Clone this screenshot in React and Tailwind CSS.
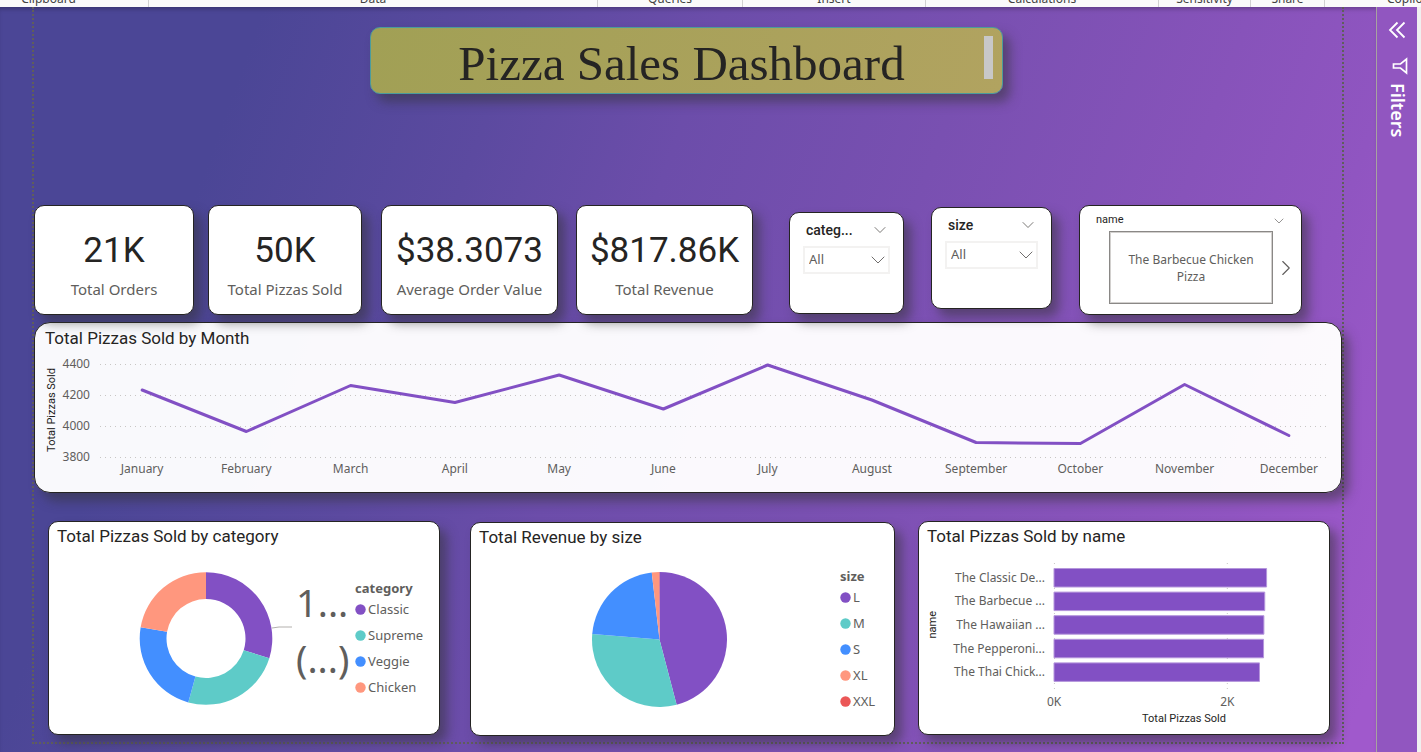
import { ChevronDown, ChevronRight } from "lucide-react";

const PURPLE = "#8250c4";
const TEAL = "#5ecbc8";
const BLUE = "#438fff";
const CORAL = "#ff977e";
const RED = "#eb5757";

const card =
  "min-w-0 rounded-[10px] border border-[#252423] bg-white shadow-[7px_8px_11px_rgba(50,50,50,0.5)]";

const ribbonGroups = ["Data", "Queries", "Insert", "Calculations", "Sensitivity", "Share"];

const months = [
  ["January", 40],
  ["February", 81.5],
  ["March", 35.5],
  ["April", 52.5],
  ["May", 25],
  ["June", 59],
  ["July", 15],
  ["August", 50],
  ["September", 92.5],
  ["October", 93.5],
  ["November", 34.5],
  ["December", 85.5],
];

const categories = [
  { label: "Classic", color: PURPLE, from: 0, to: 107.3 },
  { label: "Supreme", color: TEAL, from: 107.3, to: 195.5 },
  { label: "Veggie", color: BLUE, from: 195.5, to: 279.7 },
  { label: "Chicken", color: CORAL, from: 279.7, to: 360 },
];

const sizes = [
  { label: "L", color: PURPLE, from: 0, to: 165.3 },
  { label: "M", color: TEAL, from: 165.3, to: 274.7 },
  { label: "S", color: BLUE, from: 274.7, to: 353.4 },
  { label: "XL", color: CORAL, from: 353.4, to: 359.5 },
  { label: "XXL", color: RED, from: 359.5, to: 360 },
];

const pizzas = [
  ["The Classic De...", 2453],
  ["The Barbecue ...", 2432],
  ["The Hawaiian ...", 2422],
  ["The Pepperoni...", 2418],
  ["The Thai Chick...", 2371],
];

function slicePath(cx, cy, outer, inner, from, to) {
  const point = (r, deg) => {
    const a = ((deg - 90) * Math.PI) / 180;
    return `${(cx + r * Math.cos(a)).toFixed(2)} ${(cy + r * Math.sin(a)).toFixed(2)}`;
  };
  const large = to - from > 180 ? 1 : 0;
  return `M${point(outer, from)}A${outer} ${outer} 0 ${large} 1 ${point(outer, to)}L${point(inner, to)}A${inner} ${inner} 0 ${large} 0 ${point(inner, from)}Z`;
}

function Ribbon() {
  return (
    <header className="relative z-10 grid h-[7px] grid-cols-[149fr_449fr_145fr_183fr_233fr_92fr_74fr_96fr] items-end overflow-hidden bg-[#fafafa] text-center text-xs leading-4 text-[#424242]">
      <span className="flex h-[7px] min-w-0 items-end justify-center border-r border-[#d1d1d1] pr-[51px]">Clipboard</span>
      {ribbonGroups.map((g) => (
        <span key={g} className="flex h-[7px] min-w-0 items-end justify-center border-r border-[#d1d1d1]">
          {g}
        </span>
      ))}
      <span className="flex h-[7px] min-w-0 items-end pl-[62px]">Copilot</span>
    </header>
  );
}

function Kpi({ value, label, className }) {
  return (
    <section className={`${card} min-h-[110px] pt-[25px] text-center ${className}`}>
      <p className="font-[Roboto,sans-serif] text-[35px] leading-10 whitespace-nowrap text-[#252423]">{value}</p>
      <p className="mt-2 text-[15px] leading-5 whitespace-nowrap text-[#605e5c]">{label}</p>
    </section>
  );
}

function DropdownSlicer({ id, title, className }) {
  return (
    <section className={`${card} min-h-[102px] px-[13px] pt-[5px] ${className}`}>
      <div className="flex h-6 items-center justify-between pl-[3px]">
        <label htmlFor={id} className="font-[Roboto,sans-serif] text-sm font-medium text-[#252423]">
          {title}
        </label>
        <button type="button" aria-label="Slicer options" className="text-[#605e5c]">
          <ChevronDown className="size-5" strokeWidth={1} />
        </button>
      </div>
      <div className="relative mt-1">
        <select
          id={id}
          className="block h-7 w-full appearance-none border-2 border-[#f3f2f1] bg-white pl-1 text-[13px] text-[#605e5c]"
        >
          <option>All</option>
        </select>
        <ChevronDown
          className="pointer-events-none absolute top-0.5 right-0 size-6 text-[#605e5c]"
          strokeWidth={0.9}
        />
      </div>
    </section>
  );
}

function NameSlicer() {
  return (
    <section className={`${card} ml-[27px] min-h-[110px] pr-1`}>
      <div className="flex h-[25px] items-center justify-between pt-1 pr-2.5 pl-4">
        <h2 className="font-[Roboto,sans-serif] text-[11px] text-[#252423]">name</h2>
        <button type="button" aria-label="Slicer options" className="text-[#605e5c]">
          <ChevronDown className="size-4" strokeWidth={1} />
        </button>
      </div>
      <div className="flex items-center pl-[29px]">
        <button
          type="button"
          className="h-[73px] min-w-0 flex-1 border border-[#8a8886] px-4 text-xs leading-[17px] text-[#605e5c] outline outline-[#d2d0ce] -outline-offset-2"
        >
          The Barbecue Chicken Pizza
        </button>
        <button type="button" aria-label="Next" className="text-[#605e5c]">
          <ChevronRight className="-mr-0.5 size-[26px]" strokeWidth={1} />
        </button>
      </div>
    </section>
  );
}

function CardTitle({ children }) {
  return (
    <h2 className="font-[Roboto,sans-serif] text-[17px] leading-6 whitespace-nowrap text-[#252423]">{children}</h2>
  );
}

function MonthChart() {
  const step = 1252 / 12;
  const points = months.map(([, y], i) => `${(step * (i + 0.5)).toFixed(1)},${y}`).join(" ");
  return (
    <section className="mt-[7px] min-h-[171px] rounded-2xl border border-[#252423] bg-white/97 pt-[3px] shadow-[7px_8px_11px_rgba(50,50,50,0.5)]">
      <div className="pl-2.5">
        <CardTitle>Total Pizzas Sold by Month</CardTitle>
      </div>
      <div className="flex items-start">
        <div className="ml-[9px] flex h-[120px] w-4 items-center justify-center">
          <span className="rotate-180 font-[Roboto,sans-serif] text-[11px] leading-4 whitespace-nowrap text-[#252423] [writing-mode:vertical-rl]">
            Total Pizzas Sold
          </span>
        </div>
        <div className="mt-1.5 flex h-[109px] w-[30px] flex-col justify-between text-right text-xs leading-4 text-[#605e5c]">
          <span>4400</span>
          <span>4200</span>
          <span>4000</span>
          <span>3800</span>
        </div>
        <div className="min-w-0 flex-1">
          <svg
            viewBox="0 0 1252 111"
            preserveAspectRatio="none"
            className="block h-[111px] w-full"
            role="img"
            aria-label="Total pizzas sold by month"
          >
            {[14.5, 45.5, 76.5, 107.5].map((y) => (
              <line
                key={y}
                x1="10"
                x2="1238"
                y1={y}
                y2={y}
                stroke="#c8c6c4"
                strokeDasharray="1 4"
                vectorEffect="non-scaling-stroke"
              />
            ))}
            <polyline
              points={points}
              fill="none"
              stroke={PURPLE}
              strokeWidth="3"
              strokeLinecap="round"
              strokeLinejoin="round"
              vectorEffect="non-scaling-stroke"
            />
          </svg>
          <div className="grid grid-cols-12 text-center text-xs leading-4 text-[#605e5c]">
            {months.map(([m]) => (
              <span key={m}>{m}</span>
            ))}
          </div>
        </div>
      </div>
    </section>
  );
}

function Legend({ title, items, className }) {
  return (
    <div className={`ml-auto pt-0.5 text-[13px] text-[#605e5c] ${className}`}>
      <p className="leading-4 font-bold">{title}</p>
      <ul>
        {items.map((it) => (
          <li key={it.label} className="flex items-center gap-0.5 leading-[26px]">
            <svg viewBox="0 0 11 11" className="size-[11px]">
              <circle cx="5.5" cy="5.5" r="5.2" fill={it.color} />
            </svg>
            {it.label}
          </li>
        ))}
      </ul>
    </div>
  );
}

function CategoryChart() {
  return (
    <section className={`${card} min-h-[214px] flex-[392] pt-0.5`}>
      <div className="pl-2">
        <CardTitle>Total Pizzas Sold by category</CardTitle>
      </div>
      <div className="mt-[21px] flex h-[140px] items-center">
        <svg viewBox="0 0 156 136" className="ml-[89px] h-[136px] w-[156px] shrink-0">
          {categories.map((c) => (
            <path key={c.label} d={slicePath(68, 67.5, 66.3, 39.5, c.from, c.to)} fill={c.color} />
          ))}
          <polyline points="134,57 141,56 154,56" fill="none" stroke="#b3b0ad" />
        </svg>
        <p className="mb-[18px] ml-0.5 text-[38px] leading-[56px] text-[#605e5c]">
          1...
          <br />
          (...)
        </p>
        <Legend title="category" items={categories} className="w-[84px] shrink-0" />
      </div>
    </section>
  );
}

function SizeChart() {
  return (
    <section className={`${card} mt-px ml-[30px] min-h-[214px] flex-[425] pt-0.5`}>
      <div className="pl-2">
        <CardTitle>Total Revenue by size</CardTitle>
      </div>
      <div className="mt-[21px] flex h-[140px] items-center">
        <svg viewBox="0 0 136 136" className="ml-[121px] size-[136px] shrink-0">
          {sizes.map((s) => (
            <path key={s.label} d={slicePath(67.5, 67.5, 67.5, 0, s.from, s.to)} fill={s.color} />
          ))}
        </svg>
        <Legend title="size" items={sizes} className="w-[54px] shrink-0" />
      </div>
    </section>
  );
}

function NameChart() {
  return (
    <section className={`${card} ml-[23px] min-h-[214px] flex-[412] pt-0.5`}>
      <div className="pl-2">
        <CardTitle>Total Pizzas Sold by name</CardTitle>
      </div>
      <div className="mt-[15px] flex items-start pr-[15px] pl-1.5">
        <div className="flex h-[124px] w-4 items-center justify-center">
          <span className="rotate-180 font-[Roboto,sans-serif] text-[11px] leading-4 text-[#252423] [writing-mode:vertical-rl]">
            name
          </span>
        </div>
        <div className="mt-[3px] flex h-[118px] w-[104px] shrink-0 flex-col text-right text-xs text-[#605e5c]">
          {pizzas.map(([name]) => (
            <span key={name} className="flex flex-1 items-center justify-end whitespace-nowrap">
              {name}
            </span>
          ))}
        </div>
        <div className="ml-[9px] min-w-0 flex-1">
          <svg
            viewBox="0 0 3000 131"
            preserveAspectRatio="none"
            className="block h-[131px] w-full overflow-visible"
            role="img"
            aria-label="Total pizzas sold by name"
          >
            {[5, 2000].map((x) => (
              <line
                key={x}
                x1={x}
                x2={x}
                y1="0"
                y2="130"
                stroke="#c8c6c4"
                strokeDasharray="1 4"
                vectorEffect="non-scaling-stroke"
              />
            ))}
            {pizzas.map(([name, value], i) => (
              <rect
                key={name}
                x="0"
                y={5.5 + 23.6 * i}
                width={value}
                height="18.5"
                fill={PURPLE}
                stroke="#b596dc"
                vectorEffect="non-scaling-stroke"
              />
            ))}
          </svg>
          <div className="-mx-[16.66%] grid grid-cols-4 text-center text-xs leading-4 text-[#605e5c]">
            <span>0K</span>
            <span className="col-start-3">2K</span>
          </div>
          <p className="text-center font-[Roboto,sans-serif] text-[11px] leading-[18px] text-[#252423]">
            Total Pizzas Sold
          </p>
        </div>
      </div>
    </section>
  );
}

function FiltersPane() {
  return (
    <aside className="flex w-[45px] shrink-0 flex-col items-center border-r-4 border-l border-r-[#f0f0f0] border-l-[#a8a2a0] bg-[#9156c0] pt-[14px] text-white">
      <button type="button" aria-label="Expand filters" className="block">
        <svg viewBox="0 0 18 18" className="size-[18px]" fill="none" stroke="currentColor" strokeWidth="1.8">
          <path d="M9.500 1.500 2 9l7.500 7.500M16.500 1.500 9 9l7.500 7.500" />
        </svg>
      </button>
      <svg
        viewBox="0 0 18 18"
        className="mt-[18px] ml-1.5 size-[18px]"
        fill="none"
        stroke="currentColor"
        strokeWidth="1.7"
      >
        <path d="M15.500 2v14L9.500 11H2.500V7h7l6-5Z" />
      </svg>
      <h2 className="mt-2 ml-0.5 text-lg leading-6 font-semibold [writing-mode:vertical-rl]">Filters</h2>
    </aside>
  );
}

export default function App() {
  return (
    <div className="flex min-h-screen flex-col overflow-x-hidden font-['Noto_Sans','Open_Sans',sans-serif]">
      <Ribbon />
      <div className="flex flex-1">
        <main className="min-w-0 flex-1 bg-[linear-gradient(110deg,#4b4696_0%,#4b4696_16%,#5c4aa0_32%,#6c4daa_44%,#7950b1_60%,#8753ba_76%,#9055c1_86%,#a059cc_98%)] px-8 pb-2 shadow-[inset_0_4px_4px_-2px_rgba(0,0,0,0.25)]">
          <div className="border-2 border-t-0 border-dotted border-[#605e5c] pt-5 pb-1.5">
            <div className="pr-1">
              <div className="mx-auto flex min-h-[67px] w-[633px] max-w-full items-start rounded-[10px] border border-[#4a9c9c] bg-[linear-gradient(107deg,#a1a055,#b1a360)] px-[9px] shadow-[7px_8px_11px_rgba(50,50,50,0.5)]">
                <h1 className="flex-1 pt-[7px] text-center font-['Liberation_Serif',serif] text-[49px] leading-[58px] text-[#252423]">
                  Pizza Sales Dashboard
                </h1>
                <span className="mt-2 h-[43px] w-[9px] bg-[#c8c8c8]" />
              </div>
            </div>

            <div className="mt-[111px] grid grid-cols-[160fr_168fr_196fr_195fr_151fr_148fr_250fr] items-start pr-10">
              <Kpi value="21K" label="Total Orders" className="" />
              <Kpi value="50K" label="Total Pizzas Sold" className="ml-[14px]" />
              <Kpi value="$38.3073" label="Average Order Value" className="ml-[19px]" />
              <Kpi value="$817.86K" label="Total Revenue" className="ml-[18px]" />
              <DropdownSlicer id="category" title="categ..." className="mt-[7px] ml-9" />
              <DropdownSlicer id="size" title="size" className="mt-0.5 ml-[27px]" />
              <NameSlicer />
            </div>

            <MonthChart />

            <div className="mt-7 flex items-start pr-3 pl-[14px]">
              <CategoryChart />
              <SizeChart />
              <NameChart />
            </div>
          </div>
        </main>
        <FiltersPane />
      </div>
    </div>
  );
}
